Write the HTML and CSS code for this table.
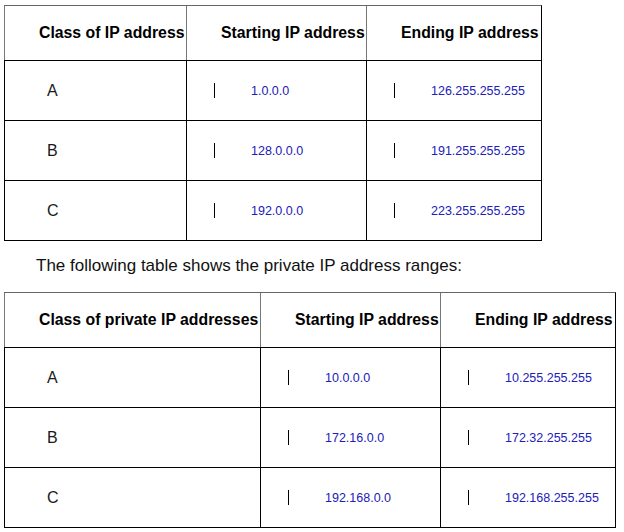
FILE: index.html
```html
<!DOCTYPE html>
<html>
<head>
<meta charset="utf-8">
<link rel="stylesheet" href="styles.css">
</head>
<body>
<div class="page">
  <div class="grid grid-public">
    <div class="cell head first">Class of IP address</div>
    <div class="cell head">Starting IP address</div>
    <div class="cell head">Ending IP address</div>

    <div class="cell cls first">A</div>
    <div class="cell ip"><span class="bar"></span><span class="addr">1.0.0.0</span></div>
    <div class="cell ip"><span class="bar"></span><span class="addr">126.255.255.255</span></div>

    <div class="cell cls first">B</div>
    <div class="cell ip"><span class="bar"></span><span class="addr">128.0.0.0</span></div>
    <div class="cell ip"><span class="bar"></span><span class="addr">191.255.255.255</span></div>

    <div class="cell cls first">C</div>
    <div class="cell ip"><span class="bar"></span><span class="addr">192.0.0.0</span></div>
    <div class="cell ip"><span class="bar"></span><span class="addr">223.255.255.255</span></div>
  </div>

  <p class="note">The following table shows the private IP address ranges:</p>

  <div class="grid grid-private">
    <div class="cell head first">Class of private IP addresses</div>
    <div class="cell head">Starting IP address</div>
    <div class="cell head">Ending IP address</div>

    <div class="cell cls first">A</div>
    <div class="cell ip"><span class="bar"></span><span class="addr">10.0.0.0</span></div>
    <div class="cell ip"><span class="bar"></span><span class="addr">10.255.255.255</span></div>

    <div class="cell cls first">B</div>
    <div class="cell ip"><span class="bar"></span><span class="addr">172.16.0.0</span></div>
    <div class="cell ip"><span class="bar"></span><span class="addr">172.32.255.255</span></div>

    <div class="cell cls first">C</div>
    <div class="cell ip"><span class="bar"></span><span class="addr">192.168.0.0</span></div>
    <div class="cell ip"><span class="bar"></span><span class="addr">192.168.255.255</span></div>
  </div>
</div>
</body>
</html>
```
FILE: styles.css
```css
html, body {
  margin: 0;
  padding: 0;
  background: #ffffff;
}

body {
  font-family: "Liberation Sans", Arial, sans-serif;
  color: #111;
}

.page {
  padding: 5px 0 0 4px;
}

.grid {
  display: grid;
  grid-template-rows: 54px 60px 60px 60px;
  border-right: 1px solid #000;
  border-bottom: 1px solid #000;
  border-top: 1px solid #666;
  box-sizing: border-box;
}

.grid-public {
  width: 538px;
  grid-template-columns: 182px 180px 175px;
}

.grid-private {
  width: 612px;
  grid-template-columns: 256px 180px 175px;
}

.cell {
  border-left: 1px solid #000;
  border-top: 1px solid #000;
  display: flex;
  align-items: center;
  box-sizing: border-box;
  white-space: nowrap;
  min-width: 0;
}

.grid > .cell:nth-child(-n+3) {
  border-top: none;
}

.head {
  font-weight: bold;
  font-size: 15.8px;
  padding-left: 34px;
  color: #000;
  border-left-color: #777;
  overflow: visible;
}

.cls {
  font-size: 16px;
  padding-left: 42px;
  color: #1a1a1a;
}

.ip {
  padding-left: 27px;
}

.bar {
  display: block;
  width: 1px;
  height: 15px;
  background: #000;
}

.addr {
  margin-left: 36px;
  font-size: 12.5px;
  color: #2020b8;
}

.note {
  margin: 15px 0 16px 32px;
  font-size: 17px;
  line-height: 20px;
  color: #111;
}
```
